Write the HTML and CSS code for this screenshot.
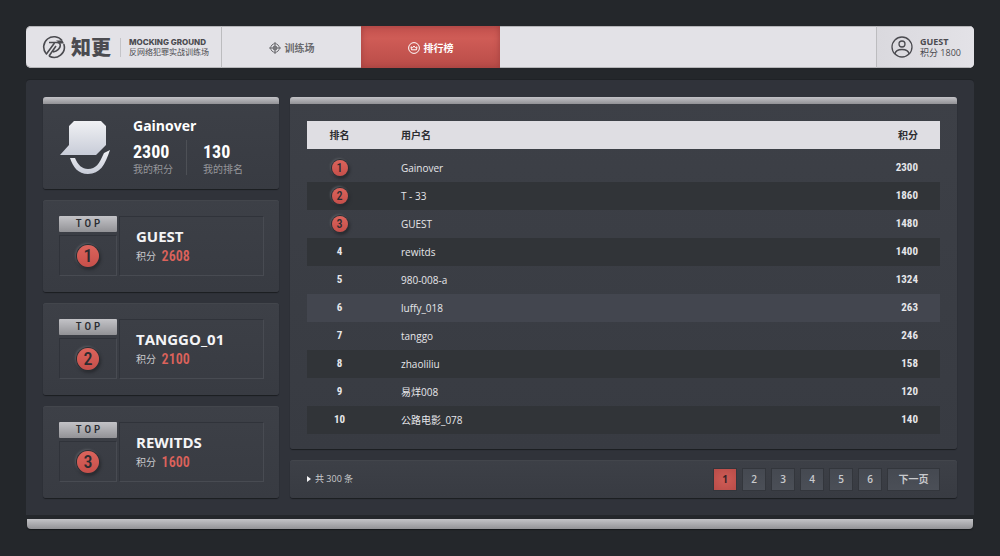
FILE: index.html
```html
<!DOCTYPE html>
<html lang="zh-CN">
<head>
<meta charset="utf-8">
<meta name="viewport" content="width=device-width, initial-scale=1">
<title>知更 - 排行榜</title>
<link rel="stylesheet" href="styles.css">
</head>
<body>
<div class="page">
  <header class="topbar">
    <a class="brand" href="#">
      <svg class="brand-mark" viewBox="0 0 24 24" fill="none" stroke="currentColor" stroke-width="1.600">
        <path d="M4 18.500A10.200 10.200 0 0 1 20 5.500M21.800 9A10.200 10.200 0 0 1 7 21"/>
        <path d="M4 19.500L12.500 8M7 21l7-10"/>
        <path d="M7 7.500h8c4.500 0 4.500 5.500-1 8.500l-3 1"/>
        <path d="M14 5.500h6.500l1.500 3h-4z" fill="currentColor" stroke="none"/>
      </svg>
      <span class="brand-name">知更</span>
      <span class="brand-sub">
        <span class="brand-en">MOCKING GROUND</span>
        <span class="brand-cn">反网络犯罪实战训练场</span>
      </span>
    </a>
    <nav class="nav">
      <a class="nav-item" href="#">
        <svg class="nav-icon" viewBox="0 0 12 12" fill="none" stroke="currentColor">
          <circle cx="6" cy="6" r="4.300"/><circle cx="6" cy="6" r="2" fill="currentColor" fill-opacity=".5"/>
          <path d="M6 0v12M0 6h12"/>
        </svg>
        训练场
      </a>
      <a class="nav-item active" href="#" aria-current="page">
        <svg class="nav-icon" viewBox="0 0 12 12" fill="none" stroke="currentColor">
          <circle cx="6" cy="6" r="5.400"/>
          <path d="M3.500 7.800L3 4.800l1.600 1L6 4l1.400 1.800 1.600-1-.5 3z"/>
        </svg>
        排行榜
      </a>
    </nav>
    <a class="account" href="#">
      <svg class="account-icon" viewBox="0 0 22 22" fill="none" stroke="currentColor" stroke-width="1.300">
        <circle cx="11" cy="11" r="10"/><circle cx="11" cy="8" r="3"/>
        <path d="M4 18c.5-3.500 3-4.500 7-4.500s6.500 1 7 4.500"/>
      </svg>
      <span class="account-text"><strong>GUEST</strong><span>积分 1800</span></span>
    </a>
  </header>

  <main class="board">
    <aside class="side">
      <section class="card capped profile">
        <svg class="avatar" viewBox="0 0 50 54">
          <defs><linearGradient id="silver" x1="0" y1="0" x2="0" y2="1"><stop offset="0" stop-color="#f0f1f4"/><stop offset="1" stop-color="#c8ccd8"/></linearGradient></defs>
          <path fill="url(#silver)" d="M14 0h27l5 5v19L36 34H0l9-10V5z"/>
          <path fill="url(#silver)" d="M10 37h5c3 7 7 11 13 11 8 0 11-5 16-16l6-3c-5 15-10 24-22 24-10 0-15-7-18-16z"/>
        </svg>
        <div>
          <h2 class="profile-name">Gainover</h2>
          <dl class="stats">
            <div class="stat"><dt>我的积分</dt><dd>2300</dd></div>
            <div class="stat"><dt>我的排名</dt><dd>130</dd></div>
          </dl>
        </div>
      </section>
      <section class="card top">
        <div class="rank"><span class="rank-label">TOP</span><span class="rank-well"><span class="medal large">1</span></span></div>
        <div class="top-info"><h3>GUEST</h3><p>积分 <b>2608</b></p></div>
      </section>
      <section class="card top">
        <div class="rank"><span class="rank-label">TOP</span><span class="rank-well"><span class="medal large">2</span></span></div>
        <div class="top-info"><h3>TANGGO_01</h3><p>积分 <b>2100</b></p></div>
      </section>
      <section class="card top">
        <div class="rank"><span class="rank-label">TOP</span><span class="rank-well"><span class="medal large">3</span></span></div>
        <div class="top-info"><h3>REWITDS</h3><p>积分 <b>1600</b></p></div>
      </section>
    </aside>

    <div class="content">
      <section class="card capped listing">
        <table class="ranking">
          <thead><tr><th class="col-rank">排名</th><th class="col-name">用户名</th><th class="col-score">积分</th></tr></thead>
          <tbody>
            <tr><td class="col-rank"><span class="medal">1</span></td><td class="col-name">Gainover</td><td class="col-score">2300</td></tr>
            <tr><td class="col-rank"><span class="medal">2</span></td><td class="col-name">T - 33</td><td class="col-score">1860</td></tr>
            <tr><td class="col-rank"><span class="medal">3</span></td><td class="col-name">GUEST</td><td class="col-score">1480</td></tr>
            <tr><td class="col-rank">4</td><td class="col-name">rewitds</td><td class="col-score">1400</td></tr>
            <tr><td class="col-rank">5</td><td class="col-name">980-008-a</td><td class="col-score">1324</td></tr>
            <tr class="hovered"><td class="col-rank">6</td><td class="col-name">luffy_018</td><td class="col-score">263</td></tr>
            <tr><td class="col-rank">7</td><td class="col-name">tanggo</td><td class="col-score">246</td></tr>
            <tr><td class="col-rank">8</td><td class="col-name">zhaoliliu</td><td class="col-score">158</td></tr>
            <tr><td class="col-rank">9</td><td class="col-name">易烊008</td><td class="col-score">120</td></tr>
            <tr><td class="col-rank">10</td><td class="col-name">公路电影_078</td><td class="col-score">140</td></tr>
          </tbody>
        </table>
      </section>
      <section class="card footer">
        <p class="total">共 300 条</p>
        <nav class="pager" aria-label="分页">
          <button class="page-btn current" aria-current="page">1</button>
          <button class="page-btn">2</button>
          <button class="page-btn">3</button>
          <button class="page-btn">4</button>
          <button class="page-btn">5</button>
          <button class="page-btn">6</button>
          <button class="page-btn next">下一页</button>
        </nav>
      </section>
    </div>
  </main>
  <div class="base"></div>
</div>
</body>
</html>
```
FILE: styles.css
```css
:root {
  --sans: "Open Sans", "Noto Sans CJK SC", sans-serif;
  --narrow: "Roboto Condensed", "Arial Narrow", Roboto, "Noto Sans CJK SC", sans-serif;
  --silver: linear-gradient(#c3c3c7, #929296);
}
* { box-sizing: border-box; }
body {
  margin: 0;
  min-height: 100vh;
  background: #24272b;
  color: #e6e6ea;
  font: 11px/16px var(--sans);
}
h2, h3, p, dl, dd { margin: 0; }
a { color: inherit; text-decoration: none; }
.page { padding: 26px 26px 27px; }

.topbar {
  display: flex;
  height: 42px;
  border-radius: 5px;
  overflow: hidden;
  background: #e3e2e7;
  color: #4b4b50;
  box-shadow: inset 0 1px #b5b5b8, inset 0 -1px #b5b5b8;
}
.brand {
  display: flex;
  align-items: center;
  width: 196px;
  padding-left: 16px;
  border-right: 1px solid #bcbcbf;
}
.brand-mark { width: 24px; height: 24px; }
.brand-name {
  margin-left: 5px;
  font: 900 20px/24px "Noto Sans CJK SC", sans-serif;
}
.brand-sub {
  display: flex;
  flex-direction: column;
  margin-left: 9px;
  padding-left: 8px;
  border-left: 1px solid #c4c4c8;
  white-space: nowrap;
}
.brand-en { font: 800 8px/9px Inter, sans-serif; }
.brand-cn { font-size: 8px; line-height: 10px; }
.nav { display: flex; }
.nav-item {
  display: flex;
  align-items: center;
  justify-content: center;
  gap: 4px;
  width: 139px;
  padding-top: 1px;
  font-size: 10px;
  font-weight: 600;
  color: #6a6a6e;
}
.nav-icon { width: 12px; height: 12px; }
.nav-item.active {
  background: linear-gradient(#c4524f, #cf5c56 30%, #b94c48);
  color: #fff;
  box-shadow: inset 0 0 6px #a0403e;
}
.account {
  display: flex;
  align-items: center;
  gap: 7px;
  width: 98px;
  margin-left: auto;
  padding-left: 14px;
  border-left: 1px solid #bcbcbf;
  background: linear-gradient(90deg, #dad9de, #e3e2e7);
  box-shadow: inset 0 1px #b5b5b8, inset 0 -1px #b5b5b8;
}
.account-icon { width: 22px; height: 22px; }
.account-text {
  display: flex;
  flex-direction: column;
  font-size: 9px;
  line-height: 11px;
  white-space: nowrap;
}

.board {
  display: grid;
  grid-template-columns: 236px 1fr;
  gap: 11px;
  margin-top: 12px;
  padding: 17px;
  border-radius: 4px 4px 0 0;
  background: #30333a;
  box-shadow: 0 -1px #1f2226;
}
.side, .content { display: flex; flex-direction: column; gap: 11px; }
.card {
  border-radius: 3px;
  background: linear-gradient(#3d4047, #383b42);
  box-shadow: inset 0 1px #43464c, 0 1px 1px #1b1d21;
}
.capped { position: relative; padding-top: 7px; }
.capped::before {
  content: "";
  position: absolute;
  inset: 0 0 auto;
  height: 7px;
  border-radius: 3px 3px 0 0;
  background: var(--silver);
}
.side .card { display: flex; height: 92px; }
.profile { gap: 23px; padding-left: 17px; }
.avatar { width: 50px; height: 54px; margin-top: 17px; }
.profile-name {
  margin-top: 12px;
  font-size: 14px;
  line-height: 20px;
  font-weight: 700;
  color: #fff;
}
.stats { display: flex; margin-top: 4px; }
.stat { display: flex; flex-direction: column-reverse; }
.stat dd { font: 700 18px/23px var(--narrow); color: #fff; }
.stat dt { font-size: 10px; line-height: 12px; color: #96979b; }
.stat + .stat { margin-left: 13px; padding-left: 16px; border-left: 1px solid #4d5056; }

.top { gap: 2px; padding: 16px 15px 16px 16px; }
.rank { display: flex; flex-direction: column; gap: 3px; width: 58px; }
.rank-label {
  height: 16px;
  border-radius: 1px;
  background: var(--silver);
  color: #2a2c31;
  font: 500 11px/16px var(--narrow);
  letter-spacing: 3px;
  text-align: center;
  text-indent: 3px;
}
.rank-well, .top-info { border: 1px solid #30333a; border-right-color: #484b52; border-bottom-color: #484b52; }
.rank-well { display: grid; place-items: center; flex: 1; }
.medal {
  display: inline-block;
  width: 16px;
  height: 16px;
  border-radius: 50%;
  background: linear-gradient(#dc645c, #c64f4a);
  box-shadow: 0 0 0 1px #2b2d32, -1px -1px 2px 1px #54575d, 1px 2px 3px 1px #292b30;
  color: #2a2c31;
  font: 500 12px/16px var(--narrow);
  text-align: center;
  vertical-align: middle;
}
.medal.large { width: 22px; height: 22px; font-size: 18px; line-height: 22px; }
.top-info { flex: 1; padding: 9px 0 0 16px; }
.top-info h3 { font-size: 15px; line-height: 20px; color: #f4f4f6; }
.top-info p { font-size: 10px; line-height: 20px; color: #c9cacd; }
.top-info b { margin-left: 3px; font: 600 14px/18px var(--narrow); color: #dc625b; vertical-align: -1px; }

.listing { padding: 24px 17px 15px; }
.ranking { width: 100%; border-collapse: collapse; table-layout: fixed; }
.ranking th {
  height: 28px;
  padding: 0;
  background: #dfdee3;
  color: #2c2d31;
  font-size: 10px;
  line-height: 14px;
  font-weight: 700;
}
.ranking thead { box-shadow: inset 0 1px #f4f4f6, inset 0 -1px #bcbcc0; }
.ranking tbody::before { content: ""; display: block; height: 5px; }
.ranking td { height: 28px; padding: 0; font-size: 10px; line-height: 14px; }
.ranking tbody tr:nth-child(even) { background: #313438; }
.ranking tbody tr.hovered { background: #43464f; }
.ranking .col-rank { width: 65px; text-align: center; }
.ranking .col-name { padding-left: 29px; text-align: left; }
.ranking .col-score { width: 100px; padding-right: 22px; text-align: right; }
.ranking td.col-rank, .ranking td.col-score { font-family: var(--narrow); font-size: 11px; font-weight: 700; }

.footer { display: flex; align-items: center; height: 38px; padding: 0 18px 0 17px; }
.total { display: flex; align-items: center; gap: 4px; font-size: 9px; color: #c9cacd; }
.total::before {
  content: "";
  border-left: 4px solid #f4f4f6;
  border-block: 3px solid transparent;
}
.pager { display: flex; gap: 7px; margin-left: auto; }
.page-btn {
  width: 22px;
  height: 21px;
  padding: 0;
  border: 0;
  background: linear-gradient(#454951, #4b4f57);
  box-shadow: 0 0 0 1px #33363c;
  color: #c9cacd;
  font: 600 10px/20px var(--sans);
}
.page-btn.current { background: radial-gradient(#cf5c56, #b94c48); color: #3b2227; font-weight: 700; }
.page-btn.next { width: 51px; }

.base {
  height: 10px;
  margin: 4px 1px 0;
  border-radius: 0 0 4px 4px;
  background: var(--silver);
  box-shadow: 0 1px 1px #15171a;
}
```
